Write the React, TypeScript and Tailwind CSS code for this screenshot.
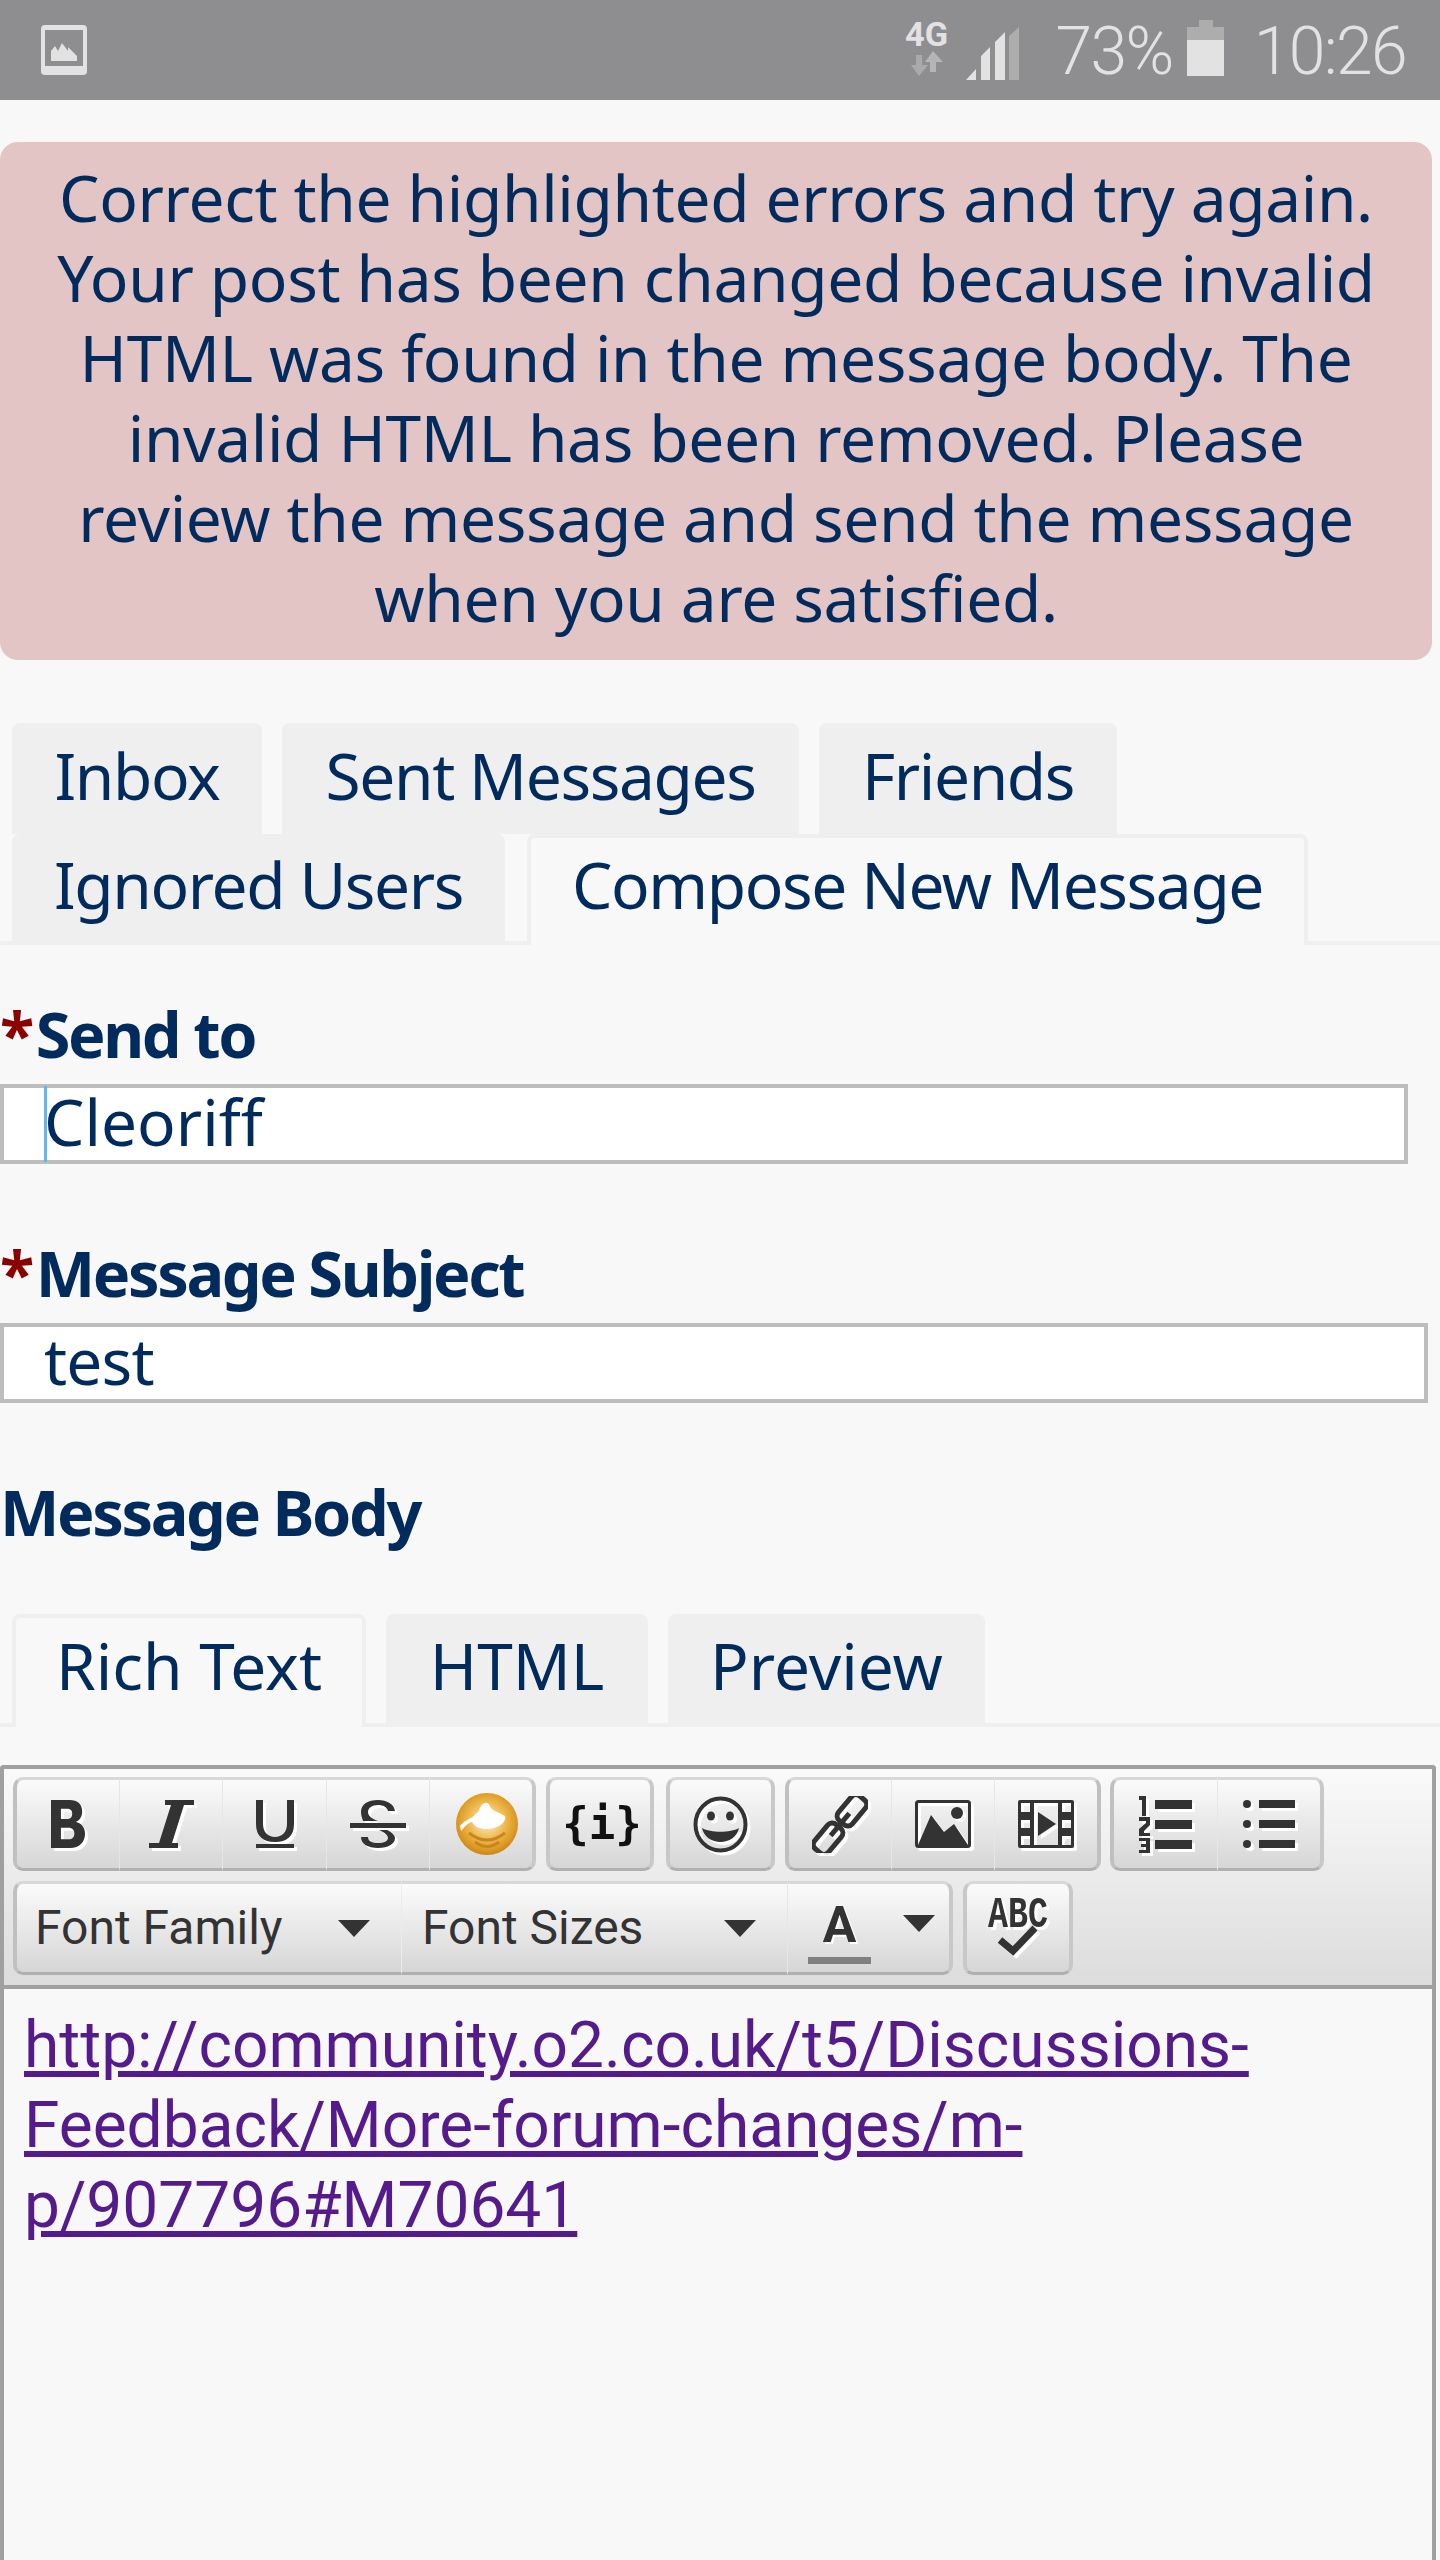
import type { ReactNode } from "react"

const navy = "font-['Noto_Sans',sans-serif] text-[#002b5c]"

function Tab({ label, active, className, tight = "tracking-[-1.4px]" }: { label: string; active?: boolean; className: string; tight?: string }) {
  return (
    <div
      className={`${className} ${navy} ${tight} flex shrink-0 items-center justify-center rounded-t-[8px] text-[64px] ${
        active ? "relative z-10 mb-[-4px] border-[4px] border-b-0 border-[#efefef] bg-[#f8f8f8] pb-[13px]" : "bg-[#efefef] pb-[6px]"
      }`}
    >
      {label}
    </div>
  )
}

function Label({ children, required }: { children: string; required?: boolean }) {
  return (
    <div className="flex h-[50px] items-center font-['Noto_Sans',sans-serif] text-[63px] font-bold tracking-[-2.4px] text-[#002b5c]">
      {required && <span className="mr-[4px] text-[#8b0000]">*</span>}
      {children}
    </div>
  )
}

function Btn({ w, children, className = "" }: { w: string; children: ReactNode; className?: string }) {
  return (
    <div
      className={`${w} ${className} flex h-[94px] shrink-0 items-center border-y-[3px] border-t-[#d8d8d8] border-b-[#b0b0b0] bg-gradient-to-b from-[#fbfbfb] to-[#d6d6d6]`}
    >
      {children}
    </div>
  )
}

const iconCls = "mx-auto text-[#333] drop-shadow-[3px_3px_0_#ffffff]"

function Caret() {
  return (
    <svg width="32" height="17" viewBox="0 0 32 17" className="shrink-0">
      <path d="M0 0H32L16 17Z" fill="#333" />
    </svg>
  )
}

export default function App() {
  return (
    <div className="flex h-[2560px] w-[1440px] flex-col overflow-hidden bg-[#f8f8f8]">
      {/* status bar */}
      <div className="flex h-[100px] shrink-0 items-center bg-[#8e8e90] pl-[41px] pr-[34px] text-[#e2e2e2]">
        <svg width="46" height="50" viewBox="0 0 46 50">
          <rect x="0" y="0" width="46" height="50" rx="4" fill="#e2e2e2" />
          <rect x="4" y="5" width="38" height="36" fill="#8e8e90" />
          <path d="M10 36V26L14 21L17 26L21 18L27 26V22L36 31V36Z" fill="#e2e2e2" />
        </svg>
        <div className="ml-auto flex items-center">
          <svg width="44" height="78" viewBox="0 -10 44 78" className="mt-[-2px]">
            <text x="0" y="26" fontSize="33" fontWeight="700" fill="#e2e2e2" fontFamily="Roboto, sans-serif" textLength="43" lengthAdjust="spacingAndGlyphs">4G</text>
            <path d="M11 35H17V45H23L14 56L6 45H11Z" fill="#aaaaab" />
            <path d="M25 52H31V42H38L28 31L20 42H25Z" fill="#b5b5b6" />
          </svg>
          <svg width="53" height="53" viewBox="0 0 53 53" className="ml-[17px] mt-[6px]">
            <path d="M0 53L10 42V53Z M15 53V29L24 20V53Z M29 53V15L39 5V53Z" fill="#e2e2e2" />
            <path d="M43 53V9L53 0V53Z" fill="#adadae" />
          </svg>
          <span className="ml-[36px] mt-[3px] font-['Roboto',sans-serif] text-[66px] font-light leading-none tracking-[-1.6px]">73%</span>
          <svg width="37" height="56" viewBox="0 0 37 56" className="ml-[14px] mt-[-4px]">
            <path d="M0 7H12V0H26V7H37V20H0Z" fill="#adadae" />
            <rect x="0" y="20" width="37" height="36" fill="#e2e2e2" />
          </svg>
          <span className="ml-[30px] mt-[3px] font-['Roboto',sans-serif] text-[66px] font-light leading-none tracking-[-1.6px]">10:26</span>
        </div>
      </div>

      {/* error message */}
      <div className={`${navy} mr-[8px] mt-[42px] h-[518px] shrink-0 rounded-[18px] bg-[#e3c5c6] pt-[16px] text-center text-[64px] leading-[80px] tracking-[-0.35px]`}>
        Correct the highlighted errors and try again.
        <br />
        Your post has been changed because invalid
        <br />
        HTML was found in the message body. The
        <br />
        invalid HTML has been removed. Please
        <br />
        review the message and send the message
        <br />
        when you are satisfied.
      </div>

      {/* mail tabs */}
      <div className="mt-[63px] shrink-0 border-b-[4px] border-[#efefef] pl-[12px]">
        <div className="flex h-[111px] gap-[20px]">
          <Tab label="Inbox" className="w-[250px]" />
          <Tab label="Sent Messages" className="w-[517px]" />
          <Tab label="Friends" className="w-[298px]" />
        </div>
        <div className="flex h-[107px] gap-[22px]">
          <Tab label="Ignored Users" className="w-[493px]" />
          <Tab label="Compose New Message" active className="w-[781px]" />
        </div>
      </div>

      <div className="mt-[64px] shrink-0">
        <Label required>Send to</Label>
      </div>
      <div className={`${navy} mt-[25px] flex h-[80px] w-[1408px] shrink-0 items-center border-[4px] border-[#bdbdbd] bg-white pl-[40px] text-[64px]`}>
        <span className="border-l-[3px] border-[#64b5f6] pb-[4px] leading-[72px]">
          <span className="ml-[-3px]">Cleoriff</span>
        </span>
      </div>

      <div className="mt-[84px] shrink-0">
        <Label required>Message Subject</Label>
      </div>
      <div className={`${navy} mt-[25px] flex h-[80px] w-[1428px] shrink-0 items-center border-[4px] border-[#bdbdbd] bg-white pb-[4px] pl-[40px] text-[64px] tracking-[-0.8px]`}>
        test
      </div>

      <div className="mt-[84px] shrink-0">
        <Label>Message Body</Label>
      </div>

      {/* editor tabs */}
      <div className="mt-[77px] flex h-[113px] shrink-0 gap-[20px] border-b-[4px] border-[#efefef] pl-[12px]">
        <Tab label="Rich Text" active tight="tracking-[0px]" className="w-[354px]" />
        <Tab label="HTML" tight="tracking-[0px]" className="w-[262px]" />
        <Tab label="Preview" tight="tracking-[0px]" className="w-[317px]" />
      </div>

      {/* editor */}
      <div className="mr-[4px] mt-[38px] flex min-h-0 flex-1 flex-col rounded-t-[4px] border-[4px] border-b-0 border-[#a0a0a0]">
        <div className="h-[220px] shrink-0 border-b-[4px] border-[#a0a0a0] bg-gradient-to-b from-[#fafafa] to-[#dcdcdc] pl-[9px] pt-[8px]">
          <div className="flex h-[94px]">
            <Btn w="w-[106px]" className="rounded-l-[10px] border-l-[4px] border-l-[#c0c0c0]">
              <svg width="34" height="48" viewBox="0 0 48 66" preserveAspectRatio="none" className={iconCls}>
                <path fillRule="evenodd" fill="currentColor" d="M0 0H26C38 0 44 6 44 16C44 23 40 28 35 30C42 32 48 37 48 46C48 58 40 66 27 66H0ZM14 12V26H24C28 26 30 23 30 19C30 15 28 12 24 12ZM14 38V54H25C30 54 33 51 33 46C33 41 30 38 25 38Z" />
              </svg>
            </Btn>
            <Btn w="w-[103px]" className="border-l border-l-[#e6e6e6]">
              <svg width="45" height="48" viewBox="0 0 45 48" className={iconCls}>
                <path fill="currentColor" d="M16 0H45V5H35L23 43H29V48H0V43H10L22 5H16Z" />
              </svg>
            </Btn>
            <Btn w="w-[104px]" className="border-l border-l-[#e6e6e6]">
              <svg width="38" height="48" viewBox="0 0 38 48" className={iconCls}>
                <path fill="currentColor" d="M0 0H7V24C7 32 12 37 19 37C26 37 31 32 31 24V0H38V24C38 36 31 42 19 42C7 42 0 36 0 24ZM0 44H38V48H0Z" />
              </svg>
            </Btn>
            <Btn w="w-[103px]" className="border-l border-l-[#e6e6e6]">
              <svg width="56" height="48" viewBox="0 0 56 48" className={iconCls}>
                <path fill="currentColor" d="M0 23H56V28H0ZM13 21C12 18 11 15 11 12C11 4 18 0 28 0C37 0 44 4 45 11H38C37 7 33 5 28 5C22 5 18 8 18 12C18 16 22 19 28 21ZM37 30C43 33 45 36 45 38C45 44 38 48 28 48C18 48 11 44 11 37H18C18 41 22 43 28 43C34 43 38 41 38 38C38 35 34 32 29 30Z" />
              </svg>
            </Btn>
            <Btn w="w-[107px]" className="rounded-r-[10px] border-l border-r-[4px] border-l-[#e6e6e6] border-r-[#c8c8c8] pl-[12px]">
              <svg width="64" height="64" viewBox="0 0 64 64" className="mx-auto">
                <defs>
                  <radialGradient id="nut" cx="50%" cy="45%" r="55%">
                    <stop offset="0%" stopColor="#fff2cf" />
                    <stop offset="55%" stopColor="#eeb84e" />
                    <stop offset="85%" stopColor="#dc9a22" />
                    <stop offset="100%" stopColor="#c9861c" />
                  </radialGradient>
                </defs>
                <circle cx="32" cy="32" r="31" fill="url(#nut)" />
                <path d="M5 34C9 29 14 27 18 25C20 22 22 21 24 19C25 12 32 7 35 14C36 19 44 20 50 24C52 31 42 37 32 37C25 37 20 35 17 30C12 31 9 36 6 39Z" fill="#ffffff" className="blur-[0.6px]" />
                <path d="M14 41Q32 55 50 41M20 50Q32 59 44 50" stroke="#c9861c" strokeWidth="3" fill="none" />
              </svg>
            </Btn>
            <Btn w="w-[108px]" className="ml-[10px] justify-center rounded-[10px] border-x-[4px] border-x-[#c8c8c8] pl-[4px]">
              <span className="font-['DejaVu_Sans_Mono',monospace] text-[44px] font-bold leading-none text-[#111] blur-[0.5px]">{"{i}"}</span>
            </Btn>
            <Btn w="w-[109px]" className="ml-[12px] rounded-[10px] border-x-[4px] border-x-[#c8c8c8]">
              <svg width="55" height="57" viewBox="0 0 55 57" className={iconCls}>
                <ellipse cx="27.500" cy="28.500" rx="25" ry="26" fill="none" stroke="currentColor" strokeWidth="4" />
                <ellipse cx="18" cy="20" rx="4" ry="4.500" fill="currentColor" />
                <ellipse cx="37" cy="20" rx="4" ry="4.500" fill="currentColor" />
                <path d="M9 32C18 37 37 37 46 32C44 41 36 46 27.500 46C19 46 11 41 9 32Z" fill="currentColor" />
              </svg>
            </Btn>
            <Btn w="w-[106px]" className="ml-[10px] rounded-l-[10px] border-l-[4px] border-l-[#c0c0c0]">
              <svg width="56" height="57" viewBox="0 0 56 57" className={iconCls}>
                <g fill="none" stroke="currentColor" strokeWidth="5" transform="rotate(40 28 28.500)">
                  <rect x="19" y="-6" width="18" height="32" rx="6" />
                  <rect x="19" y="31" width="18" height="32" rx="6" />
                  <path d="M28 14V43" />
                </g>
              </svg>
            </Btn>
            <Btn w="w-[103px]" className="border-l border-l-[#e6e6e6]">
              <svg width="56" height="48" viewBox="0 0 56 48" className={iconCls}>
                <rect x="1.500" y="1.500" width="53" height="45" rx="2" fill="none" stroke="currentColor" strokeWidth="3" />
                <ellipse cx="42" cy="13" rx="6" ry="6" fill="currentColor" />
                <path d="M3 45L16 15L29 32L39 24L53 45Z" fill="currentColor" />
              </svg>
            </Btn>
            <Btn w="w-[107px]" className="rounded-r-[10px] border-l border-r-[4px] border-l-[#e6e6e6] border-r-[#c0c0c0]">
              <svg width="56" height="48" viewBox="0 0 56 48" className={iconCls}>
                <path fillRule="evenodd" fill="currentColor" d="M2 0H54Q56 0 56 2V46Q56 48 54 48H2Q0 48 0 46V2Q0 0 2 0ZM3 3V12H12V3ZM44 3V12H53V3ZM3 20V28H12V20ZM44 20V28H53V20ZM3 36V45H12V36ZM44 36V45H53V36ZM16 3V45H40V3Z" />
                <path fill="currentColor" d="M20 12L38 24L20 36Z" />
              </svg>
            </Btn>
            <Btn w="w-[107px]" className="ml-[9px] rounded-l-[10px] border-l-[4px] border-l-[#c0c0c0]">
              <svg width="53" height="57" viewBox="0 0 53 57" className={iconCls}>
                <path fill="currentColor" d="M0 0H7V20H3V4H0ZM0 21H11V29L5 35V37H11V40H0V33L7 27V25H0ZM0 42H11V57H0V54H7V51H2V48H7V45H0ZM16 4H53V13H16ZM16 24H53V33H16ZM16 44H53V53H16Z" />
              </svg>
            </Btn>
            <Btn w="w-[107px]" className="rounded-r-[10px] border-l border-r-[4px] border-l-[#e6e6e6] border-r-[#c8c8c8]">
              <svg width="52" height="48" viewBox="0 0 52 48" className={iconCls}>
                <path fill="currentColor" d="M16 0H52V8H16ZM16 20H52V28H16ZM16 40H52V48H16Z" />
                <ellipse cx="4" cy="4" rx="4" ry="4" fill="currentColor" />
                <ellipse cx="4" cy="24" rx="4" ry="4" fill="currentColor" />
                <ellipse cx="4" cy="44" rx="4" ry="4" fill="currentColor" />
              </svg>
            </Btn>
          </div>
          <div className="mt-[10px] flex h-[94px]">
            <Btn w="w-[388px]" className="justify-between rounded-l-[10px] border-l-[4px] border-l-[#c0c0c0] pl-[18px] pr-[31px]">
              <span className="font-['Roboto',sans-serif] text-[48px] text-[#333]">Font Family</span>
              <Caret />
            </Btn>
            <Btn w="w-[386px]" className="justify-between border-l border-l-[#ececec] pl-[20px] pr-[31px]">
              <span className="font-['Roboto',sans-serif] text-[48px] text-[#333]">Font Sizes</span>
              <Caret />
            </Btn>
            <Btn w="w-[166px]" className="rounded-r-[10px] border-l border-r-[4px] border-l-[#e6e6e6] border-r-[#c8c8c8] pl-[20px]">
              <div className="mt-[12px] flex w-[63px] flex-col items-center">
                <span className="font-['Roboto',sans-serif] text-[50px] font-bold leading-[40px] text-[#333] drop-shadow-[2px_2px_0_#ffffff]">A</span>
                <div className="mt-[12px] h-[7px] w-[63px] bg-[#808080]" />
              </div>
              <div className="mb-[10px] ml-[32px]">
                <Caret />
              </div>
            </Btn>
            <Btn w="w-[110px]" className="ml-[10px] rounded-[10px] border-x-[4px] border-x-[#c8c8c8]">
              <svg width="84" height="86" viewBox="-12 -14 84 86" className={iconCls}>
                <text x="0" y="28" fontSize="44" fontWeight="700" fontFamily="Liberation Mono, monospace" textLength="60" lengthAdjust="spacingAndGlyphs" fill="currentColor">ABC</text>
                <path d="M12 41L25 52L47 29" fill="none" stroke="currentColor" strokeWidth="7" />
              </svg>
            </Btn>
          </div>
        </div>
        <div className="flex-1 pl-[20px] pt-[17px] font-['Roboto',sans-serif] text-[64px] leading-[80px] text-[#551a8b]">
          <a className="underline">
            http://community.o2.co.uk/t5/Discussions-
            <br />
            Feedback/More-forum-changes/m-
            <br />
            p/907796#M70641
          </a>
        </div>
      </div>
    </div>
  )
}
